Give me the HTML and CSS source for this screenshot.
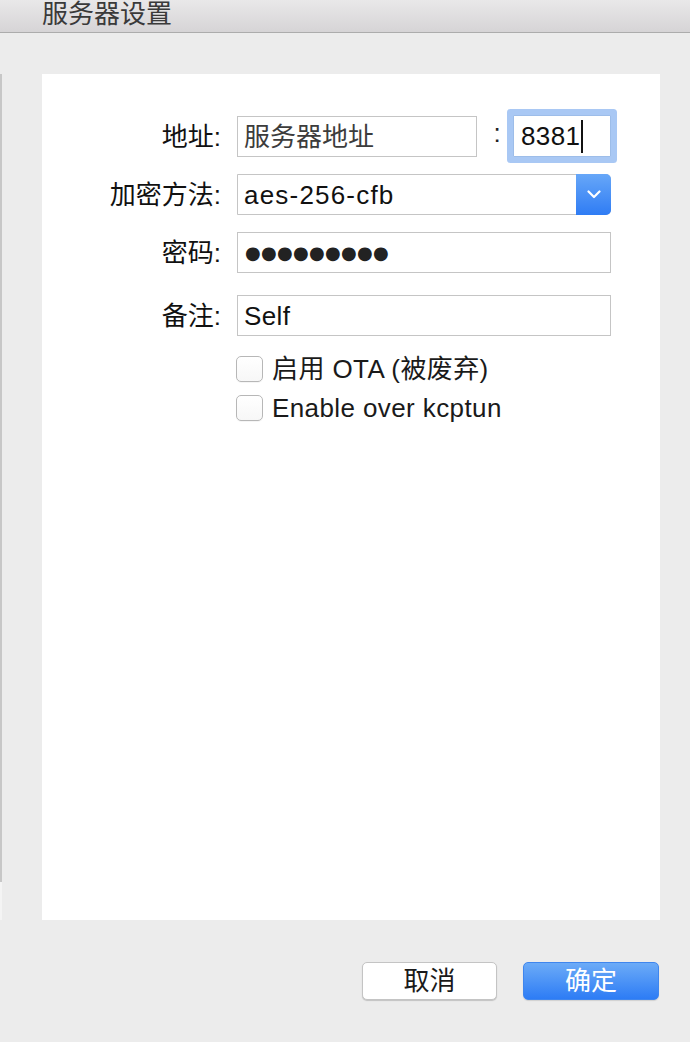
FILE: index.html
```html
<!DOCTYPE html>
<html lang="zh-CN">
<head>
<meta charset="utf-8">
<title>服务器设置</title>
<link rel="stylesheet" href="styles.css">
</head>
<body>
<header class="titlebar"><span class="title">服务器设置</span></header>
<div class="main">
  <div class="edge"></div>
  <section class="panel">
    <div class="row row-addr">
      <label class="label">地址:</label>
      <div class="field">
        <div class="input addr"><span class="placeholder">服务器地址</span></div>
        <span class="port-colon">:</span>
        <div class="input port"><span class="value">8381</span><span class="caret"></span></div>
      </div>
    </div>
    <div class="row row-method">
      <label class="label">加密方法:</label>
      <div class="select">
        <span class="value method">aes-256-cfb</span>
        <span class="select-btn">
          <svg width="14" height="9" viewBox="0 0 14 9"><path d="M1.5 1.5 L7 7 L12.5 1.5" fill="none" stroke="#fff" stroke-width="2.2" stroke-linecap="round" stroke-linejoin="round"/></svg>
        </span>
      </div>
    </div>
    <div class="row row-pass">
      <label class="label">密码:</label>
      <div class="input wide"><span class="dots">●●●●●●●●●</span></div>
    </div>
    <div class="row row-note">
      <label class="label">备注:</label>
      <div class="input wide"><span class="value">Self</span></div>
    </div>
    <div class="check-row check-ota">
      <span class="checkbox"></span><span class="check-text">启用 OTA (被废弃)</span>
    </div>
    <div class="check-row check-kcp">
      <span class="checkbox"></span><span class="check-text">Enable over kcptun</span>
    </div>
  </section>
</div>
<footer class="footer">
  <button class="btn btn-cancel">取消</button>
  <button class="btn btn-ok">确定</button>
</footer>
</body>
</html>
```
FILE: styles.css
```css
html, body {
  margin: 0;
  padding: 0;
}
body {
  width: 690px;
  height: 1042px;
  overflow: hidden;
  background: #ececec;
  font-family: "Liberation Sans", "Noto Sans CJK SC", sans-serif;
  font-size: 26px;
  color: #111;
}
.titlebar {
  height: 32px;
  border-bottom: 1px solid #acacac;
  background: linear-gradient(#e9e8e9, #d6d4d6);
  padding-left: 42px;
  box-sizing: content-box;
}
.title {
  display: block;
  padding-top: 1px;
  line-height: 26px;
  color: #3a3a3a;
}
.main {
  display: flex;
  padding-top: 41px;
}
.edge {
  width: 2px;
  height: 846px;
  background: linear-gradient(#c7c7c7 0 808px, #f4f4f4 808px);
}
.panel {
  margin-left: 40px;
  width: 618px;
  height: 846px;
  background: #fff;
  padding-top: 42px;
  box-sizing: border-box;
}
.row {
  display: grid;
  grid-template-columns: 179px 374px;
  column-gap: 16px;
  align-items: center;
  height: 41px;
}
.row-method { margin-top: 17px; }
.row-pass { margin-top: 17px; }
.row-note { margin-top: 22px; }
.label {
  text-align: right;
  line-height: 30px;
  color: #111;
}
.field {
  display: flex;
  align-items: center;
  height: 41px;
}
.input {
  box-sizing: border-box;
  height: 41px;
  border: 1px solid #c5c5c5;
  background: #fff;
  display: flex;
  align-items: center;
  padding-left: 6px;
  line-height: 30px;
}
.addr {
  width: 240px;
}
.placeholder {
  color: #3c3c3c;
}
.port-colon {
  width: 36px;
  text-align: center;
  line-height: 20px;
  margin-top: -8px;
  padding-left: 4px;
  box-sizing: border-box;
  color: #222;
}
.port {
  width: 98px;
  height: 42px;
  margin-top: -1px;
  border-color: #9dbde9;
  border-radius: 1px;
  box-shadow: 0 0 0 6px #a9c8f4;
  padding-left: 7px;
}
.value {
  color: #111;
  letter-spacing: 0.4px;
}
.value.method {
  letter-spacing: 1.2px;
}
.caret {
  display: inline-block;
  width: 2px;
  height: 33px;
  background: #111;
  margin-left: 1px;
}
.select {
  box-sizing: border-box;
  height: 41px;
  display: flex;
  align-items: center;
  border: 1px solid #c5c5c5;
  border-radius: 0 5px 5px 0;
  background: #fff;
  padding-left: 6px;
  line-height: 30px;
}
.select .value {
  flex: 1;
}
.select-btn {
  align-self: stretch;
  width: 35px;
  margin: -1px -1px -1px 0;
  border-radius: 0 5px 5px 0;
  background: linear-gradient(#67a7f8, #2f7cf4);
  display: flex;
  align-items: center;
  justify-content: center;
}
.select-btn svg {
  display: block;
}
.dots {
  font-family: "DejaVu Sans", sans-serif;
  font-size: 18px;
  letter-spacing: 0.3px;
  color: #222;
  line-height: 30px;
  margin-left: 1px;
}
.check-row {
  display: flex;
  align-items: center;
  height: 26px;
  margin-left: 194px;
}
.check-ota { margin-top: 20px; }
.check-kcp { margin-top: 12px; height: 27px; }
.checkbox {
  box-sizing: border-box;
  width: 27px;
  height: 26px;
  border: 1px solid #b7b7b7;
  border-radius: 5px;
  background: linear-gradient(#fff, #f7f7f7);
  box-shadow: 0 1px 0 rgba(0,0,0,0.04);
  flex: none;
}
.check-text {
  margin-left: 9px;
  line-height: 30px;
  color: #1a1a1a;
  letter-spacing: 0.4px;
}
.footer {
  display: flex;
  justify-content: flex-end;
  gap: 26px;
  padding-top: 42px;
  padding-right: 31px;
}
.btn {
  box-sizing: border-box;
  width: 135px;
  height: 38px;
  border-radius: 5px;
  font-family: "Liberation Sans", "Noto Sans CJK SC", sans-serif;
  font-size: 26px;
  line-height: 30px;
  padding: 0;
  margin: 0;
}
.btn-cancel {
  background: #fff;
  border: 1px solid #c4c4c4;
  color: #1a1a1a;
  box-shadow: 0 1px 1px rgba(0,0,0,0.18);
}
.btn-ok {
  width: 136px;
  background: linear-gradient(#6cabf7, #2d7cf5);
  border: 1px solid #3f86ee;
  color: #fff;
  box-shadow: 0 1px 1px rgba(0,0,0,0.12);
}
```
